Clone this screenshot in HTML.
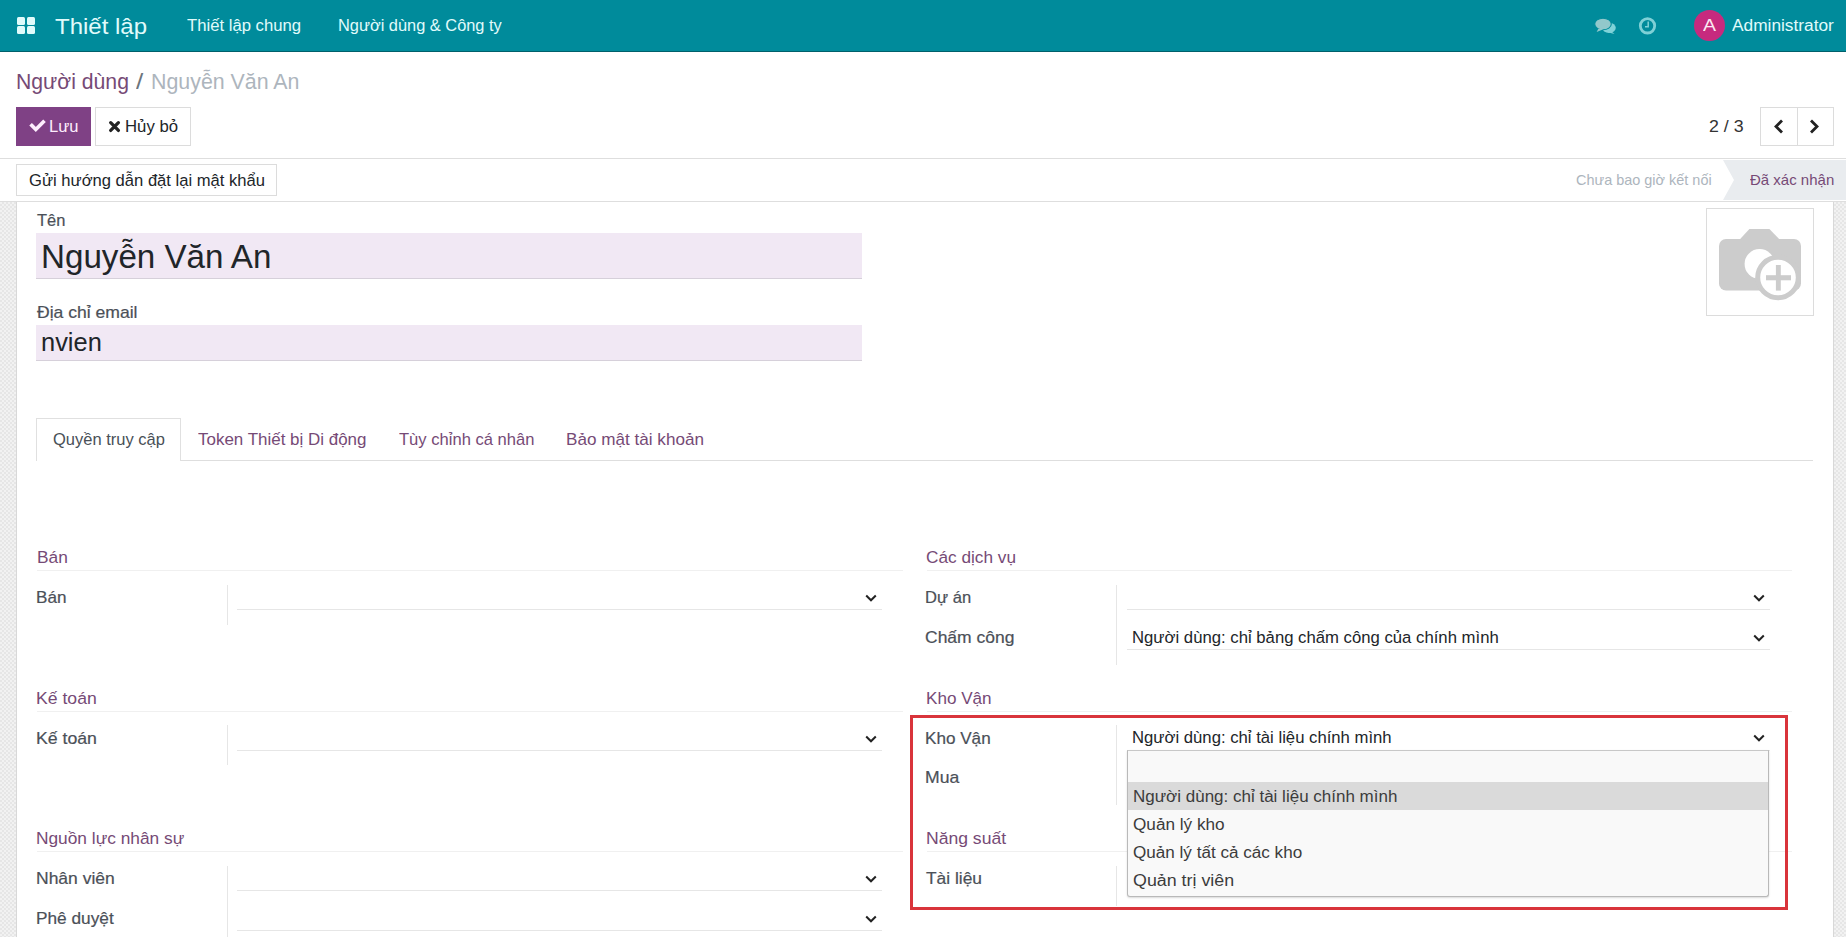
<!DOCTYPE html>
<html><head><meta charset="utf-8"><style>
html,body{margin:0;padding:0;}
body{width:1846px;height:937px;overflow:hidden;position:relative;background:#fff;font-family:"Liberation Sans", sans-serif;}
.t{position:absolute;white-space:nowrap;}
.r{position:absolute;}
</style></head><body>
<div class="r" style="left:0px;top:0px;width:1846px;height:51px;background:#008b9b;"></div>
<div class="r" style="left:0px;top:51px;width:1846px;height:1px;background:#00606b;"></div>
<div class="r" style="left:16.5px;top:17px;width:8.5px;height:7.5px;background:#e0fbfb;border-radius:1.5px;"></div>
<div class="r" style="left:26.5px;top:17px;width:8.5px;height:7.5px;background:#e0fbfb;border-radius:1.5px;"></div>
<div class="r" style="left:16.5px;top:26px;width:8.5px;height:7.5px;background:#e0fbfb;border-radius:1.5px;"></div>
<div class="r" style="left:26.5px;top:26px;width:8.5px;height:7.5px;background:#e0fbfb;border-radius:1.5px;"></div>
<div class="t " style="left:54.92px;top:11.56px;font-size:22.5px;line-height:29px;color:#e0fbfb;transform:scaleX(1.0667);transform-origin:0 0;">Thiết lập</div>
<div class="t " style="left:186.67px;top:15.51px;font-size:16px;line-height:20px;color:#e0fbfb;transform:scaleX(1.0426);transform-origin:0 0;">Thiết lập chung</div>
<div class="t " style="left:338.19px;top:15.51px;font-size:16px;line-height:20px;color:#e0fbfb;transform:scaleX(1.0237);transform-origin:0 0;">Người dùng &amp; Công ty</div>
<div class="t " style="left:1732.00px;top:15.71px;font-size:16px;line-height:20px;color:#e0fbfb;transform:scaleX(1.0809);transform-origin:0 0;">Administrator</div>
<div class="r" style="left:1693.5px;top:9.5px;width:31px;height:31px;background:#c72a7e;border-radius:50%;"></div>
<div class="t " style="left:1702.50px;top:15.71px;font-size:16px;line-height:20px;color:#fbe9f3;transform:scaleX(1.2218);transform-origin:0 0;">A</div>
<svg class="r" style="left:1590px;top:15px" width="30" height="22" viewBox="0 0 30 22"><ellipse cx="19" cy="12.8" rx="6.8" ry="5.1" fill="#7fd2d8"/><path d="M21 16 L24.5 19 L17.5 17.2 Z" fill="#7fd2d8"/><ellipse cx="13" cy="9" rx="8.3" ry="5.8" fill="#92c8cb" stroke="#008b9b" stroke-width="1.1"/><path d="M8.5 13.6 L6.6 17 L13.5 14.3 Z" fill="#92c8cb"/></svg>
<svg class="r" style="left:1636px;top:14px" width="24" height="24" viewBox="0 0 24 24"><circle cx="11.5" cy="11.8" r="7.2" fill="none" stroke="#7fd0d6" stroke-width="2.8"/><path d="M12.2 7.6 V12.7 H9" fill="none" stroke="#7fd0d6" stroke-width="1.5"/></svg>
<div class="t " style="left:15.50px;top:67.53px;font-size:22px;line-height:28px;color:#764a76;transform:scaleX(0.9635);transform-origin:0 0;">Người dùng</div>
<div class="t " style="left:136.00px;top:67.53px;font-size:22px;line-height:28px;color:#6c757d;transform:scaleX(1.1851);transform-origin:0 0;">/</div>
<div class="t " style="left:151.29px;top:67.53px;font-size:22px;line-height:28px;color:#adb5bd;transform:scaleX(0.9712);transform-origin:0 0;">Nguyễn Văn An</div>
<div class="r" style="left:16px;top:107px;width:75px;height:39px;background:#7f4185;"></div>
<svg class="r" style="left:29px;top:119px" width="17" height="14" viewBox="0 0 17 14"><path d="M2.9 6.6 L6.8 10.5 L14.2 3.1" fill="none" stroke="#fdeefd" stroke-width="3.7" stroke-linecap="square"/></svg>
<div class="t " style="left:49.48px;top:116.38px;font-size:17px;line-height:22px;color:#fdeefd;transform:scaleX(0.9714);transform-origin:0 0;">Lưu</div>
<div class="r" style="left:95px;top:107px;width:95.5px;height:39px;background:#fff;border:1px solid #dcdcdc;box-sizing:border-box;"></div>
<svg class="r" style="left:108px;top:120px" width="13" height="13" viewBox="0 0 13 13"><path d="M2.7 2.7 L10.4 10.4 M10.4 2.7 L2.7 10.4" stroke="#222" stroke-width="3.3" stroke-linecap="round"/></svg>
<div class="t " style="left:125.06px;top:115.98px;font-size:17px;line-height:22px;color:#212529;transform:scaleX(0.9852);transform-origin:0 0;">Hủy bỏ</div>
<div class="t " style="left:1708.61px;top:116.35px;font-size:16.2px;line-height:21px;color:#333;transform:scaleX(1.0981);transform-origin:0 0;">2 / 3</div>
<div class="r" style="left:1760px;top:107px;width:74px;height:39px;border:1px solid #dcdcdc;box-sizing:border-box;"></div>
<div class="r" style="left:1796.5px;top:107px;width:1px;height:39px;background:#dcdcdc;"></div>
<svg class="r" style="left:1772px;top:118px" width="14" height="17" viewBox="0 0 14 17"><path d="M10 2.5 L4 8.5 L10 14.5" fill="none" stroke="#222" stroke-width="2.8"/></svg>
<svg class="r" style="left:1807px;top:118px" width="14" height="17" viewBox="0 0 14 17"><path d="M4 2.5 L10 8.5 L4 14.5" fill="none" stroke="#222" stroke-width="2.8"/></svg>
<div class="r" style="left:0px;top:158px;width:1846px;height:1px;background:#dedede;"></div>
<div class="r" style="left:16px;top:164px;width:261px;height:32px;border:1px solid #dcdcdc;box-sizing:border-box;background:#fff;"></div>
<div class="t " style="left:28.77px;top:170.11px;font-size:16.3px;line-height:21px;color:#212529;transform:scaleX(1.0192);transform-origin:0 0;">Gửi hướng dẫn đặt lại mật khẩu</div>
<div class="t " style="left:1576.28px;top:170.77px;font-size:14.3px;line-height:18px;color:#adb5bd;transform:scaleX(1.0109);transform-origin:0 0;">Chưa bao giờ kết nối</div>
<svg class="r" style="left:1723px;top:160px" width="123" height="41" viewBox="0 0 123 41"><path d="M0 0 H123 V40 H0 L11 20 Z" fill="#e9ecef"/></svg>
<div class="t " style="left:1749.72px;top:170.77px;font-size:14.3px;line-height:18px;color:#764a76;transform:scaleX(1.0493);transform-origin:0 0;">Đã xác nhận</div>
<div class="r" style="left:0px;top:201px;width:1846px;height:1px;background:#dedede;"></div>
<div class="r" style="left:0px;top:202px;width:16px;height:735px;background-color:#f2f2f2;background-image:linear-gradient(45deg,#e6e6e6 25%,transparent 25%,transparent 75%,#e6e6e6 75%),linear-gradient(45deg,#e6e6e6 25%,transparent 25%,transparent 75%,#e6e6e6 75%);background-size:4px 4px;background-position:0 0,2px 2px;"></div>
<div class="r" style="left:1834px;top:202px;width:12px;height:735px;background-color:#f2f2f2;background-image:linear-gradient(45deg,#e6e6e6 25%,transparent 25%,transparent 75%,#e6e6e6 75%),linear-gradient(45deg,#e6e6e6 25%,transparent 25%,transparent 75%,#e6e6e6 75%);background-size:4px 4px;background-position:0 0,2px 2px;"></div>
<div class="r" style="left:16px;top:202px;width:1px;height:735px;background:#d8d8d8;"></div>
<div class="r" style="left:1833px;top:202px;width:1px;height:735px;background:#d8d8d8;"></div>
<div class="t " style="left:37.07px;top:209.65px;font-size:16.2px;line-height:21px;color:#4b5058;transform:scaleX(1.0156);transform-origin:0 0;-webkit-text-stroke:0.2px #4b5058;">Tên</div>
<div class="r" style="left:36px;top:233px;width:826px;height:46px;background:#f1e8f4;border-bottom:1px solid #d6d0da;box-sizing:border-box;"></div>
<div class="t " style="left:40.75px;top:234.76px;font-size:34px;line-height:43px;color:#212529;transform:scaleX(0.9751);transform-origin:0 0;">Nguyễn Văn An</div>
<div class="t " style="left:37.31px;top:301.65px;font-size:16.2px;line-height:21px;color:#4b5058;transform:scaleX(1.0849);transform-origin:0 0;-webkit-text-stroke:0.2px #4b5058;">Địa chỉ email</div>
<div class="r" style="left:36px;top:325px;width:826px;height:35.5px;background:#f1e8f4;border-bottom:1px solid #d6d0da;box-sizing:border-box;"></div>
<div class="t " style="left:41.05px;top:326.04px;font-size:25px;line-height:32px;color:#212529;transform:scaleX(1.0177);transform-origin:0 0;">nvien</div>
<div class="r" style="left:1706px;top:208px;width:108px;height:108px;border:1px solid #dcdcdc;box-sizing:border-box;background:#fff;"></div>
<svg class="r" style="left:1706px;top:208.5px" width="108" height="107" viewBox="0 0 108 107"><rect x="13" y="30" width="82" height="51.6" rx="7" fill="#cccccc"/><path d="M33.7 30.5 L43.4 20 H63.4 L73.6 30.5 Z" fill="#cccccc"/><circle cx="53.6" cy="55" r="15" fill="#fff"/><circle cx="72" cy="68.5" r="20.3" fill="#fff" stroke="#cccccc" stroke-width="5"/><rect x="69.9" y="56" width="4.9" height="25.6" fill="#cccccc"/><rect x="60" y="66.2" width="25" height="5.1" fill="#cccccc"/></svg>
<div class="r" style="left:36px;top:460px;width:1777px;height:1px;background:#dedede;"></div>
<div class="r" style="left:36px;top:418px;width:145px;height:43px;border:1px solid #e0e0e0;border-bottom:none;background:#fff;box-sizing:border-box;"></div>
<div class="t " style="left:52.76px;top:429.18px;font-size:17px;line-height:22px;color:#495057;transform:scaleX(0.9709);transform-origin:0 0;">Quyền truy cập</div>
<div class="t " style="left:197.66px;top:429.18px;font-size:17px;line-height:22px;color:#764a76;transform:scaleX(0.9978);transform-origin:0 0;">Token Thiết bị Di động</div>
<div class="t " style="left:398.67px;top:429.18px;font-size:17px;line-height:22px;color:#764a76;transform:scaleX(0.9749);transform-origin:0 0;">Tùy chỉnh cá nhân</div>
<div class="t " style="left:565.63px;top:429.18px;font-size:17px;line-height:22px;color:#764a76;transform:scaleX(1.0070);transform-origin:0 0;">Bảo mật tài khoản</div>
<div class="t " style="left:37.21px;top:547.11px;font-size:16.3px;line-height:21px;color:#764a76;transform:scaleX(1.0656);transform-origin:0 0;">Bán</div>
<div class="r" style="left:37px;top:570px;width:866px;height:1px;background:#f0f0f0;"></div>
<div class="t " style="left:36.23px;top:586.85px;font-size:16.2px;line-height:21px;color:#4b5058;transform:scaleX(1.0571);transform-origin:0 0;-webkit-text-stroke:0.2px #4b5058;">Bán</div>
<div class="r" style="left:227px;top:585px;width:1px;height:40px;background:#e6e6e6;"></div>
<div class="r" style="left:237px;top:609px;width:645px;height:1px;background:#e6e6e6;"></div>
<svg class="r" style="left:865px;top:594px" width="12" height="9" viewBox="0 0 12 9"><path d="M1.2 1.5 L6 6.3 L10.8 1.5" fill="none" stroke="#222" stroke-width="2"/></svg>
<div class="t " style="left:36.39px;top:688.11px;font-size:16.3px;line-height:21px;color:#764a76;transform:scaleX(1.0820);transform-origin:0 0;">Kế toán</div>
<div class="r" style="left:37px;top:711px;width:866px;height:1px;background:#f0f0f0;"></div>
<div class="t " style="left:35.58px;top:728.05px;font-size:16.2px;line-height:21px;color:#4b5058;transform:scaleX(1.0924);transform-origin:0 0;-webkit-text-stroke:0.2px #4b5058;">Kế toán</div>
<div class="r" style="left:227px;top:725px;width:1px;height:40px;background:#e6e6e6;"></div>
<div class="r" style="left:237px;top:750px;width:645px;height:1px;background:#e6e6e6;"></div>
<svg class="r" style="left:865px;top:735px" width="12" height="9" viewBox="0 0 12 9"><path d="M1.2 1.5 L6 6.3 L10.8 1.5" fill="none" stroke="#222" stroke-width="2"/></svg>
<div class="t " style="left:36.41px;top:828.11px;font-size:16.3px;line-height:21px;color:#764a76;transform:scaleX(1.0630);transform-origin:0 0;">Nguồn lực nhân sự</div>
<div class="r" style="left:37px;top:851px;width:866px;height:1px;background:#f0f0f0;"></div>
<div class="t " style="left:35.60px;top:867.65px;font-size:16.2px;line-height:21px;color:#4b5058;transform:scaleX(1.0801);transform-origin:0 0;-webkit-text-stroke:0.2px #4b5058;">Nhân viên</div>
<div class="t " style="left:35.62px;top:907.65px;font-size:16.2px;line-height:21px;color:#4b5058;transform:scaleX(1.0654);transform-origin:0 0;-webkit-text-stroke:0.2px #4b5058;">Phê duyệt</div>
<div class="r" style="left:227px;top:866px;width:1px;height:71px;background:#e6e6e6;"></div>
<div class="r" style="left:237px;top:890px;width:645px;height:1px;background:#e6e6e6;"></div>
<svg class="r" style="left:865px;top:875px" width="12" height="9" viewBox="0 0 12 9"><path d="M1.2 1.5 L6 6.3 L10.8 1.5" fill="none" stroke="#222" stroke-width="2"/></svg>
<div class="r" style="left:237px;top:930px;width:645px;height:1px;background:#e6e6e6;"></div>
<svg class="r" style="left:865px;top:915px" width="12" height="9" viewBox="0 0 12 9"><path d="M1.2 1.5 L6 6.3 L10.8 1.5" fill="none" stroke="#222" stroke-width="2"/></svg>
<div class="t " style="left:926.14px;top:546.71px;font-size:16.3px;line-height:21px;color:#764a76;transform:scaleX(1.0577);transform-origin:0 0;">Các dịch vụ</div>
<div class="r" style="left:927px;top:570px;width:865px;height:1px;background:#f0f0f0;"></div>
<div class="t " style="left:924.67px;top:586.95px;font-size:16.2px;line-height:21px;color:#4b5058;transform:scaleX(1.0237);transform-origin:0 0;-webkit-text-stroke:0.2px #4b5058;">Dự án</div>
<div class="t " style="left:925.12px;top:627.05px;font-size:16.2px;line-height:21px;color:#4b5058;transform:scaleX(1.0802);transform-origin:0 0;-webkit-text-stroke:0.2px #4b5058;">Chấm công</div>
<div class="r" style="left:1116px;top:585px;width:1px;height:80px;background:#e6e6e6;"></div>
<div class="r" style="left:1127px;top:609px;width:643px;height:1px;background:#e6e6e6;"></div>
<svg class="r" style="left:1753px;top:594px" width="12" height="9" viewBox="0 0 12 9"><path d="M1.2 1.5 L6 6.3 L10.8 1.5" fill="none" stroke="#222" stroke-width="2"/></svg>
<div class="t " style="left:1132.06px;top:626.75px;font-size:16.8px;line-height:21px;color:#212529;transform:scaleX(0.9956);transform-origin:0 0;">Người dùng: chỉ bảng chấm công của chính mình</div>
<div class="r" style="left:1127px;top:649px;width:643px;height:1px;background:#e6e6e6;"></div>
<svg class="r" style="left:1753px;top:634px" width="12" height="9" viewBox="0 0 12 9"><path d="M1.2 1.5 L6 6.3 L10.8 1.5" fill="none" stroke="#222" stroke-width="2"/></svg>
<div class="t " style="left:925.63px;top:687.91px;font-size:16.3px;line-height:21px;color:#764a76;transform:scaleX(1.0508);transform-origin:0 0;">Kho Vận</div>
<div class="r" style="left:927px;top:711px;width:865px;height:1px;background:#f0f0f0;"></div>
<div class="t " style="left:924.63px;top:727.65px;font-size:16.2px;line-height:21px;color:#4b5058;transform:scaleX(1.0572);transform-origin:0 0;-webkit-text-stroke:0.2px #4b5058;">Kho Vận</div>
<div class="t " style="left:924.59px;top:766.65px;font-size:16.2px;line-height:21px;color:#4b5058;transform:scaleX(1.0856);transform-origin:0 0;-webkit-text-stroke:0.2px #4b5058;">Mua</div>
<div class="r" style="left:1116px;top:725px;width:1px;height:80px;background:#e6e6e6;"></div>
<div class="t " style="left:1132.06px;top:727.45px;font-size:16.8px;line-height:21px;color:#212529;transform:scaleX(0.9946);transform-origin:0 0;">Người dùng: chỉ tài liệu chính mình</div>
<div class="r" style="left:1127px;top:750px;width:643px;height:1px;background:#e6e6e6;"></div>
<svg class="r" style="left:1753px;top:734px" width="12" height="9" viewBox="0 0 12 9"><path d="M1.2 1.5 L6 6.3 L10.8 1.5" fill="none" stroke="#222" stroke-width="2"/></svg>
<div class="t " style="left:925.59px;top:827.61px;font-size:16.3px;line-height:21px;color:#764a76;transform:scaleX(1.0788);transform-origin:0 0;">Năng suất</div>
<div class="r" style="left:927px;top:851px;width:865px;height:1px;background:#f0f0f0;"></div>
<div class="t " style="left:925.65px;top:867.85px;font-size:16.2px;line-height:21px;color:#4b5058;transform:scaleX(1.0734);transform-origin:0 0;-webkit-text-stroke:0.2px #4b5058;">Tài liệu</div>
<div class="r" style="left:1116px;top:866px;width:1px;height:40px;background:#e6e6e6;"></div>
<div class="r" style="left:1126.5px;top:750px;width:642px;height:147px;background:#f9f9f9;border:1px solid #b9b9b9;border-top-color:#c8c8c8;border-radius:0 0 3px 3px;box-sizing:border-box;box-shadow:0 1px 2px rgba(0,0,0,.15);"></div>
<div class="r" style="left:1127.5px;top:782px;width:640px;height:28px;background:#dadada;"></div>
<div class="t " style="left:1132.64px;top:785.28px;font-size:17.3px;line-height:22px;color:#3c3c3c;transform:scaleX(0.9835);transform-origin:0 0;">Người dùng: chỉ tài liệu chính mình</div>
<div class="t " style="left:1133.23px;top:812.98px;font-size:17.3px;line-height:22px;color:#3c3c3c;transform:scaleX(0.9931);transform-origin:0 0;">Quản lý kho</div>
<div class="t " style="left:1133.23px;top:841.08px;font-size:17.3px;line-height:22px;color:#3c3c3c;transform:scaleX(0.9893);transform-origin:0 0;">Quản lý tất cả các kho</div>
<div class="t " style="left:1133.20px;top:869.18px;font-size:17.3px;line-height:22px;color:#3c3c3c;transform:scaleX(1.0324);transform-origin:0 0;">Quản trị viên</div>
<div class="r" style="left:910px;top:714.5px;width:878px;height:195px;border:3px solid #d9343b;box-sizing:border-box;"></div>
</body></html>
